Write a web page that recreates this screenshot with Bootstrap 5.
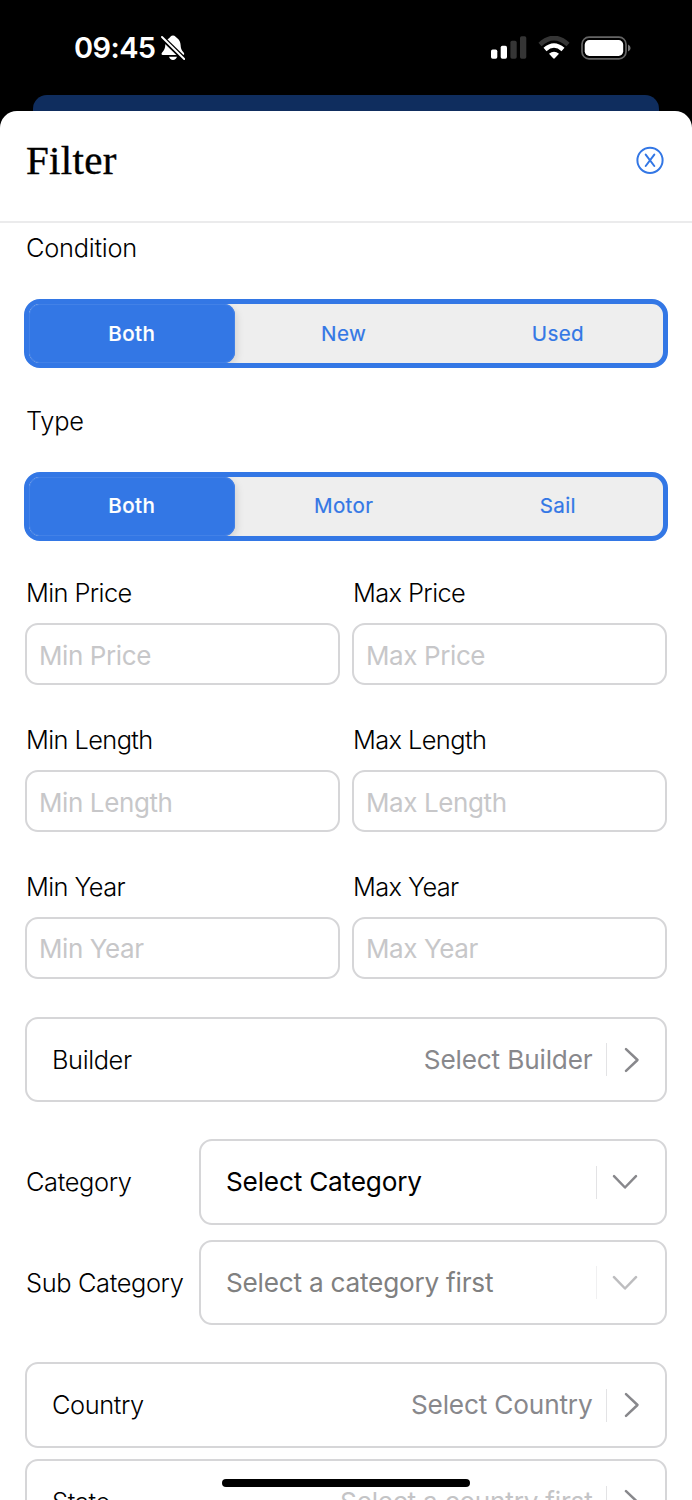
<!DOCTYPE html>
<html lang="en">
<head>
<meta charset="utf-8">
<meta name="viewport" content="width=device-width, initial-scale=1">
<title>Filter</title>
<link href="https://cdn.jsdelivr.net/npm/bootstrap@5.3.0/dist/css/bootstrap.min.css" rel="stylesheet">
<style>
  body { font-family: Inter, "Liberation Sans", sans-serif; background: #000; height: 1500px; overflow: hidden; position: relative; color: #000; }
  .status-bar { height: 95px; padding: 0 61px 0 74px; }
  .clock { font-size: 29px; font-weight: 600; line-height: 95px; letter-spacing: -.6px; }
  .bell { margin-left: 6px; }
  .wifi { margin: 0 11px; }
  .sheet-behind { height: 16px; margin: 0 33px; background: #0f2d5e; border-radius: 14px 14px 0 0; }
  .sheet { height: 1389px; border-radius: 17px 17px 0 0; overflow: hidden; }
  .sheet-head { height: 111.5px; border-bottom: 2px solid #ebebec; padding: 0 28px 12px 26px; }
  .sheet-title { font: 400 41px "Liberation Serif", serif; -webkit-text-stroke: .4px #000; letter-spacing: .3px; }
  .sheet-body { padding: 0 25px; }
  .cap-label { font-size: 25.4px; font-weight: 300; line-height: 32px; padding-left: 1px; letter-spacing: -.25px; white-space: nowrap; }
  .field-row .cap-label { letter-spacing: -.6px; }
  .first-label { margin-top: 9.5px; }
  .segments { height: 69px; margin: 35px -1px 36.7px; border: 5px solid #3377e5; border-radius: 16px; background: #eee; overflow: hidden; }
  .seg { flex: 1 1 0; font-size: 20.6px; font-weight: 400; color: #3377e5; -webkit-text-stroke: .2px #3377e5; letter-spacing: .35px; padding: 1px 0 0 4px; }
  .seg-on { flex: 0 0 205.5px; color: #fff; font-weight: 500; -webkit-text-stroke: .2px #fff; background: #3377e5; border-radius: 11px; box-shadow: 0 0 0 1px #4281e7 inset, 1px 3px 8px rgba(0,0,0,.14); padding-left: 0; }
  .field-row { --bs-gutter-x: 12px; height: 146.7px; }
  .field { height: 62px; margin-top: 14px; border: 2px solid #d6d6d8; border-radius: 13px; padding: 2px 13px 0 12px; font-size: 26px; font-weight: 400; letter-spacing: -.4px; background: #fff; }
  .field::placeholder { color: #c7c7c9; opacity: 1; }
  .picker { height: 85.5px; border: 2px solid #d6d6d8; border-radius: 13px; background: #fff; padding-left: 25px; }
  .picker .cap-label { padding-left: 0; letter-spacing: -.4px; }
  .picker-first { margin-top: -.6px; }
  .value { font-size: 26.2px; line-height: 32px; color: #88888c; white-space: nowrap; letter-spacing: -.17px; }
  .value-category { color: #000; letter-spacing: -.2px; }
  .value-disabled { color: #808080; letter-spacing: -.23px; }
  .value-faint { color: #c4c4c6; letter-spacing: -.23px; }
  .rule { width: 1.5px; height: 33px; background: #e3e3e5; margin-left: 13px; }
  .faint { opacity: .55; }
  .go { width: 58px; padding-left: 17px; }
  .drop { width: 68px; padding-left: 15px; }
  .side-label { width: 174px; letter-spacing: -.37px; }
  .gap-top { margin-top: 37px; }
  .gap-small { margin-top: 15px; }
  .gap-tiny { margin-top: 11.5px; }
  .chev { fill: none; stroke: #88888c; stroke-width: 2.5; stroke-linecap: round; stroke-linejoin: round; }
  .home-bar { position: absolute; left: 222px; top: 1479px; width: 248px; height: 8px; border-radius: 4px; background: #000; }
</style>
</head>
<body>
<header class="status-bar d-flex align-items-center justify-content-between text-white">
  <div class="d-flex align-items-center">
    <span class="clock">09:45</span>
    <svg class="bell" width="24" height="26" viewBox="0 0 24 26" fill="#fff"><path d="M8 3.2C9.2 2.3 9.8.5 12 .5s2.700 1.500 4 2.600c2.600 2 3.400 4 3.600 7 .2 3.500.7 5 3 7.400.9 1 .9 2.500-.6 2.500H1.700C.4 20 .2 18.600 1.100 17.500c2.300-2.600 3-4 3.200-7.400C4.500 7 5.500 4.800 8 3.200zM8 21.700h8c-.6 1.900-2 3.300-4 3.300s-3.400-1.400-4-3.300z"/><path d="M1 2.500 23 24" stroke="#000" stroke-width="5"/><path d="M1 2 23.200 24" stroke="#fff" stroke-width="1.900" stroke-linecap="round"/></svg>
  </div>
  <div class="d-flex align-items-center">
    <svg width="36" height="23" viewBox="0 0 36 23"><rect x="0" y="13.500" width="6.300" height="9.200" rx="1.700" fill="#fff"/><rect x="9.700" y="9.700" width="6.300" height="13" rx="1.700" fill="#fff"/><rect x="19.400" y="4.800" width="6.300" height="17.900" rx="1.700" fill="#353535"/><rect x="29" y=".3" width="6.300" height="22.400" rx="1.700" fill="#353535"/></svg>
    <svg class="wifi" width="32" height="24" viewBox="0 0 32 24" fill="none"><path d="M2 8.500Q16-4.500 30 8.500" stroke="#353535" stroke-width="4.600"/><path d="M7 13.500q9-8 18 0" stroke="#fff" stroke-width="4.500"/><path d="M11 17.700q5-4 10 0l-4.200 4.600q-.8.800-1.600 0z" fill="#fff"/></svg>
    <svg width="50" height="24" viewBox="0 0 50 24"><rect x="1" y="1.200" width="44" height="21.600" rx="7" fill="none" stroke="#656565" stroke-width="1.700"/><rect x="3.700" y="4" width="38.500" height="16" rx="4.700" fill="#fff"/><path d="M47 8.400q2.600 1.200 2.600 3.600T47 15.600z" fill="#777"/></svg>
  </div>
</header>
<div class="sheet-behind"></div>
<main class="sheet bg-white">
  <div class="sheet-head d-flex align-items-center justify-content-between">
    <h1 class="sheet-title m-0">Filter</h1>
    <svg width="28" height="28" viewBox="0 0 28 28" fill="none" stroke="#3377e5" role="button" aria-label="Close"><circle cx="14" cy="14.300" r="12.600" stroke-width="2"/><path d="m9.700 8.600 8.600 11.400M18.300 8.600 9.700 20" stroke-width="2" stroke-linecap="round"/></svg>
  </div>
  <div class="sheet-body">
    <div class="cap-label first-label">Condition</div>
    <div class="segments d-flex">
      <div class="seg seg-on d-flex align-items-center justify-content-center">Both</div>
      <div class="seg d-flex align-items-center justify-content-center">New</div>
      <div class="seg d-flex align-items-center justify-content-center">Used</div>
    </div>
    <div class="cap-label">Type</div>
    <div class="segments d-flex">
      <div class="seg seg-on d-flex align-items-center justify-content-center">Both</div>
      <div class="seg d-flex align-items-center justify-content-center">Motor</div>
      <div class="seg d-flex align-items-center justify-content-center">Sail</div>
    </div>
    <div class="row field-row">
      <div class="col-6"><div class="cap-label">Min Price</div><input class="form-control field" placeholder="Min Price"></div>
      <div class="col-6"><div class="cap-label">Max Price</div><input class="form-control field" placeholder="Max Price"></div>
    </div>
    <div class="row field-row">
      <div class="col-6"><div class="cap-label">Min Length</div><input class="form-control field" placeholder="Min Length"></div>
      <div class="col-6"><div class="cap-label">Max Length</div><input class="form-control field" placeholder="Max Length"></div>
    </div>
    <div class="row field-row">
      <div class="col-6"><div class="cap-label">Min Year</div><input class="form-control field" placeholder="Min Year"></div>
      <div class="col-6"><div class="cap-label">Max Year</div><input class="form-control field" placeholder="Max Year"></div>
    </div>
    <div class="picker picker-first d-flex align-items-center">
      <span class="cap-label flex-grow-1">Builder</span><span class="value">Select Builder</span>
      <span class="rule"></span>
      <span class="go d-flex"><svg class="chev" width="16" height="26" viewBox="0 0 16 26"><path d="m2 2.200 11.500 10.800L2 23.800"/></svg></span>
    </div>
    <div class="d-flex align-items-center gap-top">
      <div class="cap-label side-label">Category</div>
      <div class="picker d-flex align-items-center flex-grow-1">
        <span class="value value-category flex-grow-1">Select Category</span>
        <span class="rule"></span>
        <span class="drop d-flex"><svg class="chev" width="26" height="16" viewBox="0 0 26 16"><path d="M2 2.200 13 13.500 24 2.200"/></svg></span>
      </div>
    </div>
    <div class="d-flex align-items-center gap-small">
      <div class="cap-label side-label">Sub Category</div>
      <div class="picker d-flex align-items-center flex-grow-1">
        <span class="value value-disabled flex-grow-1">Select a category first</span>
        <span class="rule faint"></span>
        <span class="drop d-flex faint"><svg class="chev" width="26" height="16" viewBox="0 0 26 16"><path d="M2 2.200 13 13.500 24 2.200"/></svg></span>
      </div>
    </div>
    <div class="picker d-flex align-items-center gap-top">
      <span class="cap-label flex-grow-1">Country</span><span class="value">Select Country</span>
      <span class="rule"></span>
      <span class="go d-flex"><svg class="chev" width="16" height="26" viewBox="0 0 16 26"><path d="m2 2.200 11.500 10.800L2 23.800"/></svg></span>
    </div>
    <div class="picker d-flex align-items-center gap-tiny">
      <span class="cap-label flex-grow-1">State</span><span class="value value-faint">Select a country first</span>
      <span class="rule"></span>
      <span class="go d-flex"><svg class="chev" width="16" height="26" viewBox="0 0 16 26"><path d="m2 2.200 11.500 10.800L2 23.800"/></svg></span>
    </div>
  </div>
</main>
<div class="home-bar"></div>
<script src="https://cdn.jsdelivr.net/npm/bootstrap@5.3.0/dist/js/bootstrap.bundle.min.js"></script>
</body>
</html>
